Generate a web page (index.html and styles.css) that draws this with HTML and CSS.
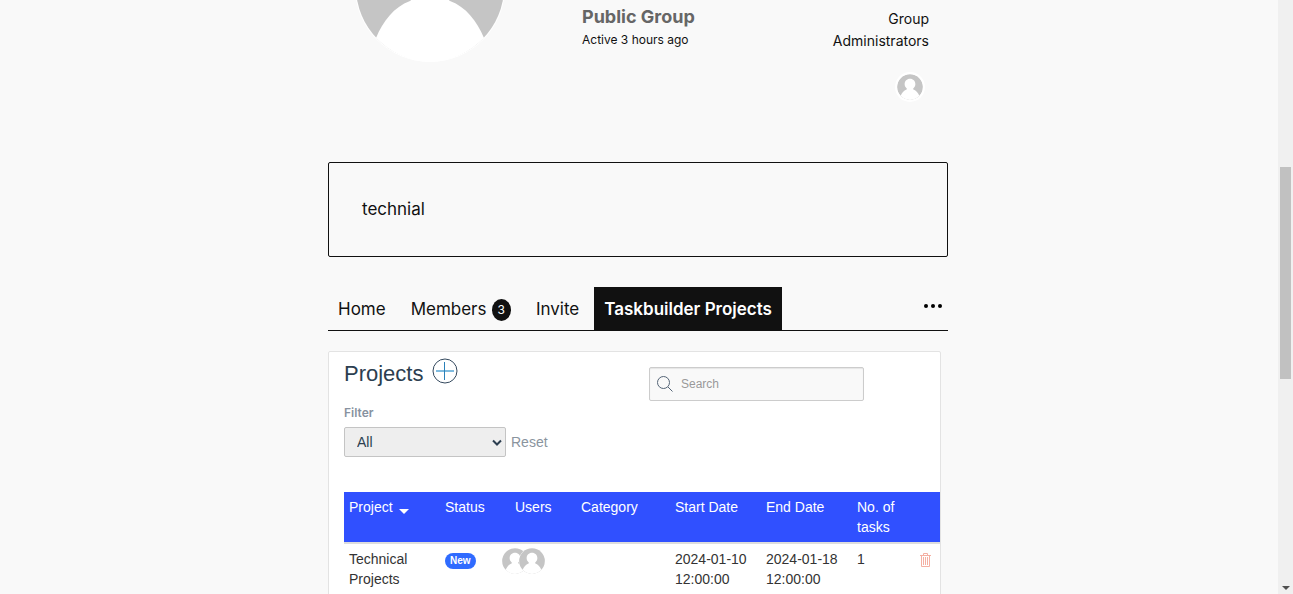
FILE: index.html
```html
<!DOCTYPE html>
<html lang="en">
<head>
	<meta charset="utf-8">
	<title>Taskbuilder Projects</title>
	<link rel="stylesheet" href="styles.css">
</head>
<body>
	<svg class="sprite" aria-hidden="true">
		<symbol id="avatar" viewBox="0 0 150 150">
			<circle cx="75" cy="75" r="75" fill="#fff"/>
			<circle cx="75" cy="75" r="74" fill="#c5c5c5"/>
			<path fill="#fff" d="M75 27c18 0 31 13 31 32 0 11-6 18-12 24-2 2-2 4 1 6 16 6 27 20 34 37-14 14-33 24-54 24s-40-10-54-24c7-17 18-31 34-37 3-2 3-4 1-6-6-6-12-13-12-24 0-19 13-32 31-32z"/>
		</symbol>
	</svg>
	<main class="page">
		<div class="content">
			<header class="groupHeader">
				<svg class="groupAvatar"><use href="#avatar"/></svg>
				<div class="groupInfo">
					<h2 class="groupType">Public Group</h2>
					<p class="activity">Active 3 hours ago</p>
				</div>
				<div class="groupAdmins">
					<h2 class="adminsTitle">Group Administrators</h2>
					<a href="#" aria-label="Administrator"><svg class="adminAvatar"><use href="#avatar"/></svg></a>
				</div>
			</header>

			<div class="description">technial</div>

			<nav class="tabs">
				<a class="tab" href="#">Home</a>
				<a class="tab" href="#">Members <span class="count">3</span></a>
				<a class="tab" href="#">Invite</a>
				<a class="tab current" href="#">Taskbuilder Projects</a>
				<button class="more" type="button" aria-label="More">
					<svg width="20" height="6" viewBox="0 0 20 6"><circle cx="3" cy="3" r="2"/><circle cx="10" cy="3" r="2"/><circle cx="17" cy="3" r="2"/></svg>
				</button>
			</nav>

			<section class="projects">
				<div class="toolbar">
					<div class="heading">
						<h1 class="title">Projects</h1>
						<button class="add" type="button" aria-label="Add project">
							<svg width="26" height="26" viewBox="0 0 26 26" fill="none">
								<circle cx="13" cy="13" r="12" stroke="#34495e"/>
								<path d="M4 13h18" stroke="#7fbbdf" stroke-width="2"/>
								<path d="M12.500 4v18" stroke="#2980b9"/>
							</svg>
						</button>
					</div>
					<div class="search">
						<svg width="16" height="16" viewBox="0 0 16 16" fill="none" stroke="#546476"><circle cx="6.500" cy="6.500" r="6"/><path d="M11 11l4.500 4.500"/></svg>
						<input class="searchBox" type="text" name="search" placeholder="Search" aria-label="Search">
					</div>
				</div>
				<label class="filterLabel" for="filter">Filter</label>
				<div class="filterRow">
					<div class="selectWrap">
						<select class="filter" id="filter">
							<option>All</option>
						</select>
						<svg class="chevron" width="10" height="8" viewBox="0 0 10 8" fill="none" stroke="#2c3e50" stroke-width="2"><path d="M1 1.500l4 4 4-4"/></svg>
					</div>
					<a class="reset" href="#">Reset</a>
				</div>
				<table class="list">
					<colgroup>
						<col class="colProject">
						<col class="colStatus">
						<col class="colUsers">
						<col class="colCategory">
						<col class="colDate">
						<col class="colDate">
						<col class="colTasks">
						<col>
					</colgroup>
					<thead>
						<tr>
							<th>Project <svg class="sort" width="10" height="5" viewBox="0 0 10 5"><path d="M0 0h10l-5 5z" fill="#fff"/></svg></th>
							<th>Status</th>
							<th>Users</th>
							<th>Category</th>
							<th>Start Date</th>
							<th>End Date</th>
							<th>No. of tasks</th>
							<th></th>
						</tr>
					</thead>
					<tbody>
						<tr>
							<td>Technical Projects</td>
							<td><span class="status">New</span></td>
							<td>
								<div class="users">
									<svg class="user"><use href="#avatar"/></svg>
									<svg class="user"><use href="#avatar"/></svg>
								</div>
							</td>
							<td></td>
							<td>2024-01-10 12:00:00</td>
							<td>2024-01-18 12:00:00</td>
							<td>1</td>
							<td>
								<button class="delete" type="button" aria-label="Delete project">
									<svg width="11" height="14" viewBox="0 0 11 14" fill="none" stroke="#f5b0a3"><path d="M0 2.500h11M3.500 2.500v-2h4v2M1.500 2.500v11h8v-11M3.500 4v8M5.500 4v8M7.500 4v8"/></svg>
								</button>
							</td>
						</tr>
					</tbody>
				</table>
			</section>
		</div>
	</main>
	<div class="scrollbar">
		<div class="thumb"></div>
		<svg class="scrollDown" width="8" height="4" viewBox="0 0 8 4"><path d="M0 0h8l-4 4z" fill="#505050"/></svg>
	</div>
</body>
</html>
```
FILE: styles.css
```css
*, *:after, *:before {
	box-sizing: border-box;
}
body {
	display: flex;
	height: 100vh;
	margin: 0;
	overflow: hidden;
	background: #f9f9f9;
	color: #111;
	font-family: Inter, sans-serif;
	font-size: 17px;
}
h1, h2, p {
	margin: 0;
}
a {
	color: inherit;
	text-decoration: none;
}
button {
	padding: 0;
	border: 0;
	background: none;
	cursor: pointer;
}
svg {
	flex: none;
}
.sprite {
	position: absolute;
	width: 0;
	height: 0;
}
.page {
	flex: 1;
	min-width: 0;
}
.content {
	max-width: 620px;
	margin: 0 auto;
}

/* group header */
.groupHeader {
	display: flex;
	height: 162px;
	padding: 0 19px 0 27px;
}
.groupAvatar {
	width: 150px;
	height: 150px;
	margin-top: -88px;
}
.groupInfo {
	flex: 1;
	padding: 4px 0 0 77px;
}
.groupType {
	color: #666;
	font-size: 18px;
	font-weight: 700;
	line-height: 26px;
}
.activity {
	font-size: 12px;
	line-height: 20px;
}
.groupAdmins {
	width: 120px;
	padding-top: 8px;
	text-align: right;
}
.adminsTitle {
	font-size: 14px;
	font-weight: 400;
	line-height: 22px;
}
.adminAvatar {
	width: 30px;
	height: 30px;
	margin: 20px 4px 0 0;
	border: 2px solid #fff;
	border-radius: 50%;
	background: #fff;
}

.description {
	padding: 32px 33px;
	border: 1px solid #111;
	border-radius: 2px;
	line-height: 29px;
}

/* tabs */
.tabs {
	display: flex;
	gap: 5px;
	margin-top: 30px;
	border-bottom: 1px solid #111;
}
.tab {
	display: flex;
	align-items: center;
	height: 43px;
	padding: 0 10px;
	line-height: 20px;
	white-space: nowrap;
}
.current {
	background: #111;
	color: #fff;
	font-weight: 600;
}
.count {
	margin: 3px 0 0 5px;
	padding: 0 6px;
	border-radius: 50%;
	background: #111;
	color: #fff;
	font-size: 12px;
	line-height: 22px;
}
.more {
	height: 34px;
	margin-left: auto;
	padding-right: 5px;
}

/* projects */
.projects {
	margin: 20px 7px 0 0;
	padding: 0 0 15px 15px;
	border: 1px solid #e3e3e3;
	border-radius: 2px;
	background: #fff;
	color: #2c3e50;
	font-family: "Liberation Sans", Arial, sans-serif;
	font-size: 14px;
	line-height: 20px;
}
.toolbar {
	display: flex;
	justify-content: space-between;
	padding-right: 76px;
}
.heading {
	display: flex;
	gap: 9px;
	padding-top: 6px;
}
.title {
	font-size: 22px;
	font-weight: 400;
	line-height: 32px;
}
.add {
	height: 26px;
}
.search {
	display: flex;
	align-items: center;
	gap: 8px;
	width: 215px;
	height: 34px;
	margin-top: 15px;
	padding: 0 7px;
	border: 1px solid #ccc;
	border-radius: 2px;
	background: #f9f9f9;
	box-shadow: inset 0 1px 1px #e5e5e5;
}
.searchBox {
	flex: 1;
	min-width: 0;
	padding: 0;
	border: 0;
	outline: none;
	background: none;
	font: 12px "Liberation Sans", Arial, sans-serif;
}
.searchBox::placeholder {
	color: #999;
}
.filterLabel {
	display: block;
	padding-top: 2px;
	color: #8792a0;
	font-family: Inter, sans-serif;
	font-size: 12px;
	font-weight: 600;
}
.filterRow {
	display: flex;
	align-items: center;
	gap: 5px;
	margin-top: 4px;
}
.selectWrap {
	position: relative;
	width: 162px;
}
.filter {
	display: block;
	width: 100%;
	height: 30px;
	padding: 0 12px;
	border: 1px solid #c4c4c4;
	border-radius: 2px;
	appearance: none;
	background: #eee;
	color: #2c3e50;
	font: 14px "Liberation Sans", Arial, sans-serif;
}
.chevron {
	position: absolute;
	top: 12px;
	right: 4px;
	pointer-events: none;
}
.reset {
	color: #8a949e;
}

/* table */
.list {
	width: 100%;
	margin-top: 35px;
	border-collapse: separate;
	border-spacing: 0;
	table-layout: fixed;
}
.list th, .list td {
	padding: 5px;
	text-align: left;
	vertical-align: top;
}
.list th {
	border-bottom: 2px solid #ddd;
	background: #3050ff;
	color: #fff;
	font-weight: 400;
}
.list td {
	color: #333;
}
.colProject {
	width: 96px;
}
.colStatus {
	width: 70px;
}
.colUsers {
	width: 66px;
}
.colCategory {
	width: 94px;
}
.colDate {
	width: 91px;
}
.colTasks {
	width: 63px;
}
.sort {
	margin: 0 0 -2px 3px;
}
.status {
	display: block;
	width: max-content;
	margin-top: 4px;
	padding: 0 5px;
	border-radius: 8px;
	background: #2f6bff;
	color: #fff;
	font-size: 10px;
	font-weight: 700;
	line-height: 16px;
}
.users {
	display: flex;
	margin: -1px 0 0 -13px;
}
.user {
	width: 26px;
	height: 26px;
}
.user + .user {
	margin-left: -9px;
}
.delete {
	display: block;
	padding-top: 4px;
}

/* scroll bar */
.scrollbar {
	display: flex;
	flex-direction: column;
	align-items: center;
	width: 17px;
	border-left: 2px solid #f9f9f9;
	background: #f0f0f0;
}
.thumb {
	width: 11px;
	height: 212px;
	margin-top: 167px;
	background: #c1c1c1;
}
.scrollDown {
	margin: auto 0 4px;
}
```
